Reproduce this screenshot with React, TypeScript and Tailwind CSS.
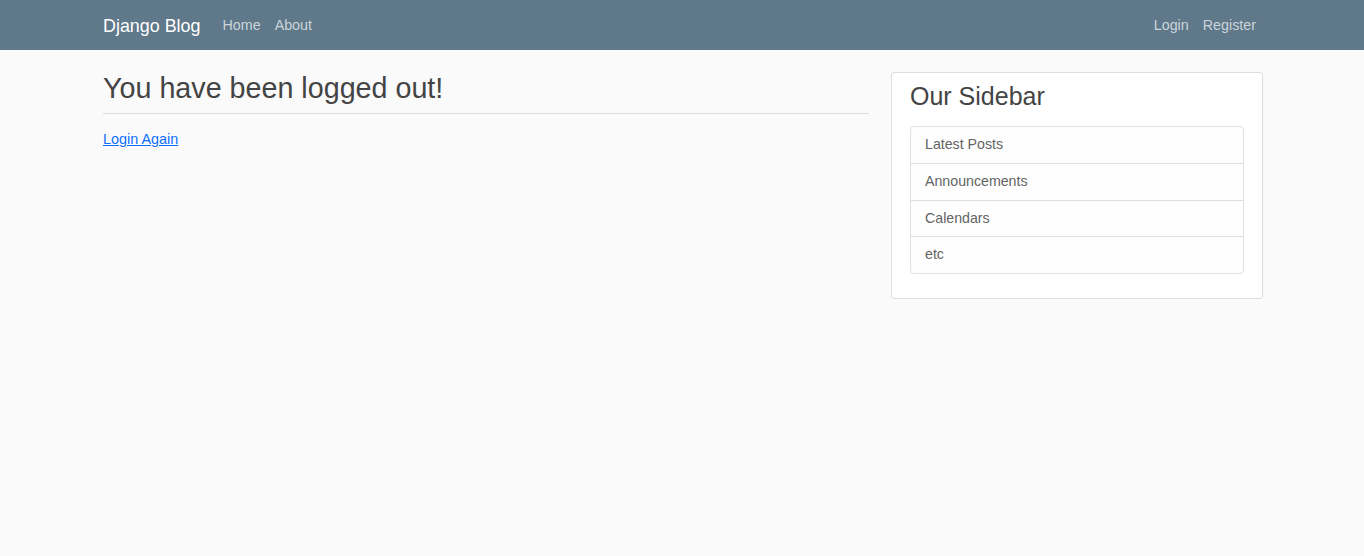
export default function App() {
  const sideLinks = ['Latest Posts', 'Announcements', 'Calendars', 'etc']

  return (
    <div className="min-h-screen bg-[#fafafa] text-[#333333] font-['Liberation_Sans',Arial,sans-serif]">
      {/* Navbar */}
      <header className="h-[50px] bg-[#5f788a]">
        <div className="mx-auto w-[1162px] pl-[2px] h-full flex items-center pt-[2px]">
          <a className="text-[17.9px] text-white mr-[15px]">Django Blog</a>
          <nav className="flex text-[14.3px] text-[#cbd5db]">
            <a className="px-[7px]">Home</a>
            <a className="px-[7px]">About</a>
          </nav>
          <nav className="ml-auto flex text-[14.3px] text-[#cbd5db]">
            <a className="px-[7px]">Login</a>
            <a className="px-[7px]">Register</a>
          </nav>
        </div>
      </header>

      {/* Main */}
      <main className="mx-auto w-[1162px] pl-[2px] flex items-start gap-[22px] pt-[22px]">
        <div className="w-[766px]">
          <h2 className="-mt-px text-[28.7px] leading-[1.2] text-[#444444] pb-[8px] border-b border-[#dddddd]">
            You have been logged out!
          </h2>
          <div className="mt-[15px] text-[14.4px] leading-[1.5]">
            <a href="#" className="text-[#0d6efd] underline">Login Again</a>
          </div>
        </div>

        <aside className="w-[372px] bg-white border border-[#dddddd] rounded-[3px] px-[18px] pt-[8px] pb-[24px]">
          <h3 className="text-[25px] leading-[1.2] text-[#444444] mb-[15px]">Our Sidebar</h3>
          <ul className="border border-[#dfdfdf] rounded-[4px] bg-[#fefefe]">
            {sideLinks.map((item, i) => (
              <li
                key={item}
                className={`px-[14px] flex items-center text-[14.2px] text-[#636464] ${i % 2 ? 'h-[37px]' : 'h-[36px]'} ${i > 0 ? 'border-t border-[#dfdfdf]' : ''}`}
              >
                {item}
              </li>
            ))}
          </ul>
        </aside>
      </main>
    </div>
  )
}
